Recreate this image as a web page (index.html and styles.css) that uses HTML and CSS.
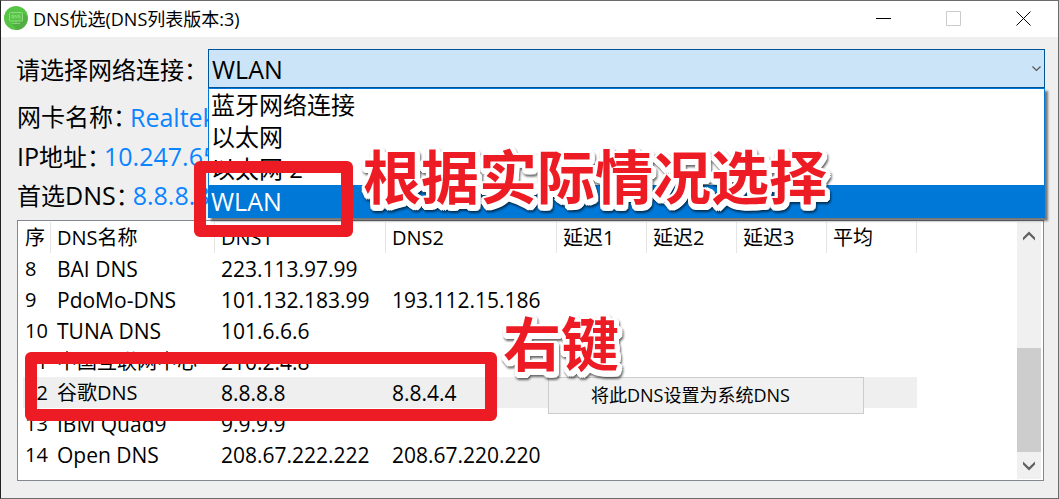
FILE: index.html
```
<!DOCTYPE html>
<html lang="zh-CN">
<head>
    <meta charset="UTF-8">
    <meta name="viewport" content="width=device-width, initial-scale=1.0">
    <title>DNS优选(DNS列表版本:3)</title>
    <link rel="stylesheet" href="styles.css">
</head>

<body>
    <div class="window">
        <header class="titlebar">
            <svg class="app-icon" viewBox="0 0 24 24">
                <circle cx="12" cy="12" r="12" fill="#57c445"/>
                <path d="M18.500 6.500L23.600 11A12 12 0 0 1 13 24L8 18Z" fill="#52b043"/>
                <rect x="5.500" y="6.500" width="13" height="8.500" rx="1" fill="#57c445" stroke="#8fdc82"/>
                <path d="M8 9v3h1.500v-3zM11 12v-3l2 3v-3M16 9h-1.500v1.500h1.500v1.500h-1.500M12 15v2M8 17.500h8" fill="none" stroke="#8fdc82" stroke-width=".8"/>
            </svg>
            <h1>DNS优选(DNS列表版本:3)</h1>
            <div class="window-buttons">
                <button type="button" aria-label="最小化">
                    <svg viewBox="0 0 16 16"><path d="M0 7.500h15" stroke="#000"/></svg>
                </button>
                <button type="button" aria-label="最大化" disabled>
                    <svg viewBox="0 0 16 16"><path d="M.5 .5h14v14h-14z" stroke="#ccc"/></svg>
                </button>
                <button type="button" aria-label="关闭">
                    <svg viewBox="0 0 16 16"><path d="M.5 .5l14 14M14.500 .5l-14 14" stroke="#000"/></svg>
                </button>
            </div>
        </header>

        <main>
            <div class="connection">
                <label for="adapter">请选择网络连接：</label>
                <div class="combo">
                    <select id="adapter">
                        <option>蓝牙网络连接</option>
                        <option>以太网</option>
                        <option>以太网 2</option>
                        <option selected>WLAN</option>
                    </select>
                    <svg class="combo-arrow" viewBox="0 0 9 6"><path d="M.5 .5l4 4 4-4" fill="none" stroke="#555" stroke-width="1.200"/></svg>
                    <ul class="combo-list" role="listbox" aria-label="网络连接">
                        <li role="option">蓝牙网络连接</li>
                        <li role="option">以太网</li>
                        <li role="option">以太网 2</li>
                        <li role="option" class="selected" aria-selected="true">WLAN</li>
                    </ul>
                </div>
            </div>

            <dl class="info">
                <div><dt>网卡名称：</dt><dd>Realtek</dd></div>
                <div><dt><span>IP</span>地址：</dt><dd>10.247.65</dd></div>
                <div><dt>首选<span>DNS</span>：</dt><dd>8.8.8.8</dd></div>
            </dl>

            <section class="list">
                <table>
                    <colgroup>
                        <col class="col-no">
                        <col class="col-name">
                        <col class="col-dns">
                        <col class="col-dns">
                        <col class="col-delay">
                        <col class="col-delay">
                        <col class="col-delay">
                        <col class="col-delay">
                    </colgroup>
                    <thead>
                        <tr><th>序</th><th>DNS名称</th><th>DNS1</th><th>DNS2</th><th>延迟1</th><th>延迟2</th><th>延迟3</th><th>平均</th></tr>
                    </thead>
                    <tbody>
                        <tr><td>8</td><td lang="en">BAI DNS</td><td>223.113.97.99</td><td></td><td></td><td></td><td></td><td></td></tr>
                        <tr><td>9</td><td lang="en">PdoMo-DNS</td><td>101.132.183.99</td><td>193.112.15.186</td><td></td><td></td><td></td><td></td></tr>
                        <tr><td>10</td><td lang="en">TUNA DNS</td><td>101.6.6.6</td><td></td><td></td><td></td><td></td><td></td></tr>
                        <tr><td>11</td><td>中国互联网中心</td><td>210.2.4.8</td><td></td><td></td><td></td><td></td><td></td></tr>
                        <tr class="selected"><td>12</td><td>谷歌DNS</td><td>8.8.8.8</td><td>8.8.4.4</td><td></td><td></td><td></td><td></td></tr>
                        <tr><td>13</td><td lang="en">IBM Quad9</td><td>9.9.9.9</td><td></td><td></td><td></td><td></td><td></td></tr>
                        <tr><td>14</td><td lang="en">Open DNS</td><td>208.67.222.222</td><td>208.67.220.220</td><td></td><td></td><td></td><td></td></tr>
                    </tbody>
                </table>
                <div class="scrollbar">
                    <button type="button" aria-label="向上滚动">
                        <svg viewBox="0 0 12 10"><path d="M0 6.500L6 .5l6 6v3L6 3.800 0 9.500z" fill="#606060"/></svg>
                    </button>
                    <div class="track"><div class="thumb"></div></div>
                    <button type="button" aria-label="向下滚动">
                        <svg viewBox="0 0 12 10"><path d="M0 3.500l6 6 6-6v-3L6 6.200 0 .5z" fill="#606060"/></svg>
                    </button>
                </div>
            </section>
        </main>

        <button type="button" class="context-menu">将此DNS设置为系统DNS</button>

        <!-- tutorial marks -->
        <div class="mark mark-adapter"></div>
        <div class="mark mark-row"></div>
        <p class="note note-adapter">根据实际情况选择</p>
        <p class="note note-row">右键</p>
    </div>
</body>
</html>
```
FILE: styles.css
```
* {
    box-sizing: border-box;
}

body {
    margin: 0;
    font-family: "Open Sans", "Noto Sans CJK SC", sans-serif;
    color: #000;
}

button {
    padding: 0;
    border: 0;
    background: transparent;
    font-family: inherit;
    color: inherit;
}

.window {
    position: relative;
    display: flex;
    flex-direction: column;
    min-height: 100vh;
    border: 1px solid #6b6b6b;
    border-left-color: #222;
    background-color: #efefef;
}

/* title bar */
.titlebar {
    display: flex;
    align-items: center;
    height: 36px;
    padding-left: 3px;
    background-color: #fff;
}

.app-icon {
    width: 24px;
    height: 24px;
    margin-bottom: 2px;
}

.titlebar h1 {
    flex: 1;
    margin: 0 0 0 5px;
    padding-bottom: 3px;
    font-size: 18px;
    font-weight: 400;
}

.window-buttons {
    display: flex;
}

.window-buttons button {
    width: 70px;
    height: 36px;
    padding-left: 28px;
}

.window-buttons svg {
    display: block;
    width: 16px;
    height: 16px;
    fill: none;
}

main {
    flex: 1;
    display: flex;
    flex-direction: column;
    padding: 12px 14px 17px 16px;
}

/* network connection combo */
.connection {
    display: flex;
    font-size: 24px;
}

.connection label {
    width: 191px;
    padding-top: 3px;
    white-space: nowrap;
    line-height: 36px;
    margin-left: -1px;
}

.combo {
    position: relative;
    flex: 1;
    margin: 0 -1px 0 1px;
}

.combo select {
    display: block;
    width: 100%;
    height: 39px;
    padding: 0 3px;
    border: 1px solid #005499;
    border-radius: 0;
    appearance: none;
    background-color: #cce4f7;
    font-family: inherit;
    font-size: 25px;
    color: #000;
}

.combo-arrow {
    position: absolute;
    top: 17px;
    right: 4px;
    width: 9px;
    height: 6px;
}

.combo-list {
    position: absolute;
    z-index: 1;
    top: 39px;
    left: 0;
    right: 0;
    margin: 0;
    padding: 0;
    list-style: none;
    border: 1px solid #0078d7;
    background-color: #fff;
    box-shadow: 3px 3px 2px rgba(0, 0, 0, 0.5);
}

.combo-list li {
    height: 32px;
    padding-left: 2px;
    line-height: 32px;
}

.combo-list .selected {
    background-color: #0078d7;
    font-size: 25px;
    color: #fff;
}

/* adapter info */
.info {
    margin: 10px 0 5px;
    font-size: 24px;
}

.info div {
    display: flex;
    height: 39px;
    line-height: 38px;
}

/* half-width colon */
.info dt {
    font-feature-settings: "halt";
}

.info dt span {
    font-size: 25px;
}

.info dd {
    margin: 0 0 0 5px;
    font-size: 25px;
    color: #0a84ff;
}

/* dns table */
.list {
    flex: 1;
    display: flex;
    justify-content: space-between;
    border: 1px solid #828790;
    padding: 1px 2px 1px 5px;
    background-color: #fff;
}

table {
    align-self: flex-start;
    width: 894px;
    table-layout: fixed;
    border-spacing: 0;
    font-size: 20px;
}

.col-no {
    width: 28px;
}

.col-name {
    width: 164px;
}

.col-dns {
    width: 171px;
}

.col-delay {
    width: 90px;
}

th,
td {
    height: 31px;
    padding: 0 0 0 6px;
    line-height: 30px;
    text-align: left;
    font-weight: 400;
    white-space: nowrap;
}

th:first-child,
td:first-child {
    padding-left: 2px;
}

/* latin text and addresses */
td:lang(en),
td:nth-child(n+3) {
    font-size: 21px;
}

th {
    border-right: 1px solid #e5e5e5;
}

tr.selected {
    background-color: #efefef;
}

.scrollbar {
    display: flex;
    flex-direction: column;
    width: 24px;
    background-color: #f0f0f0;
}

.scrollbar button {
    height: 27px;
}

.scrollbar svg {
    display: block;
    width: 12px;
    height: 10px;
    margin: 0 auto;
}

.track {
    flex: 1;
    display: flex;
    flex-direction: column;
    justify-content: flex-end;
}

.thumb {
    height: 51%;
    background-color: #cdcdcd;
}

.context-menu {
    position: absolute;
    top: 376px;
    left: 547px;
    width: 316px;
    height: 37px;
    padding: 0 0 4px 42px;
    border: 1px solid #ccc;
    background-color: #f1f1f1;
    font-size: 18px;
    text-align: left;
}

/* tutorial marks */
.mark {
    position: absolute;
    z-index: 2;
    border: 12px solid #ed1c24;
    border-radius: 6px;
}

.mark-adapter {
    top: 160px;
    left: 193px;
    width: 159px;
    height: 76px;
}

.mark-row {
    top: 351px;
    left: 24px;
    width: 472px;
    height: 69px;
}

.note {
    position: absolute;
    z-index: 3;
    margin: 0;
    font-family: "Noto Sans CJK SC", sans-serif;
    font-size: 58px;
    font-weight: 700;
    line-height: 60px;
    white-space: nowrap;
    color: #ed1c24;
    /* white outline, a little lower than the letters */
    text-shadow:
        -3px 2px #fff, 5px 2px #fff, 1px -2px #fff, 1px 6px #fff,
        -2px -1px #fff, 4px -1px #fff, -2px 5px #fff, 4px 5px #fff,
        -3px 0 #fff, 5px 0 #fff, -3px 4px #fff, 5px 4px #fff,
        -1px 6px #fff, 3px 6px #fff, -1px -2px #fff, 3px -2px #fff,
        1px 3px #fff, 1px 1px #fff;
    filter: drop-shadow(1px 2px 1px rgba(0, 0, 0, 0.6));
}

.note-adapter {
    top: 143px;
    left: 362px;
}

.note-row {
    top: 310px;
    left: 502px;
}
```
